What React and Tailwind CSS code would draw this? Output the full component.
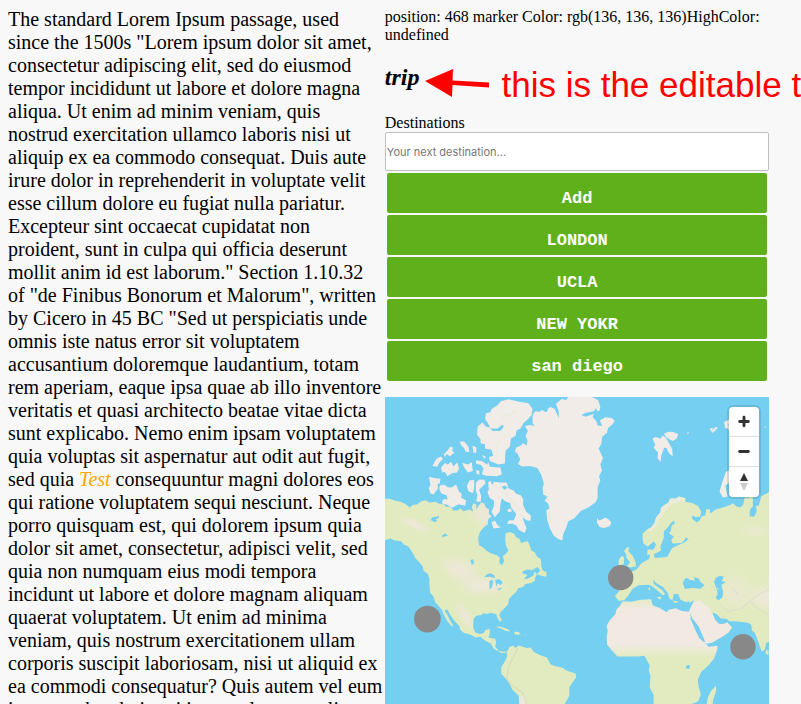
import React from "react";

const stops = ["LONDON", "UCLA", "NEW YOKR", "san diego"];

const actionClass =
  "block h-10 w-full rounded-xs bg-[#5fb01a] pt-3 text-center font-['Liberation_Mono',monospace] text-[17px] font-bold leading-7 text-white";

const tundra = "#f1ece7";
const meadow = "#e2ebbf";
const water = "#74cff1";

function WorldMap() {
  return (
    <svg
      className="block h-full w-full"
      viewBox="0 0 1152 1200"
      preserveAspectRatio="xMidYMin slice"
      role="img"
      aria-label="World map"
    >
      <defs>
        <radialGradient id="dry">
          <stop offset="0" stopColor="#efe7dc" stopOpacity="0.95" />
          <stop offset="0.5" stopColor="#efe7dc" stopOpacity="0.6" />
          <stop offset="1" stopColor="#efe7dc" stopOpacity="0" />
        </radialGradient>
        <linearGradient id="africa" x1="0" y1="0" x2="0" y2="1">
          <stop offset="0" stopColor="#e5ebc5" />
          <stop offset="0.07" stopColor="#f1e9e2" />
          <stop offset="0.31" stopColor="#f1e9e2" />
          <stop offset="0.4" stopColor={meadow} />
          <stop offset="1" stopColor={meadow} />
        </linearGradient>
        <clipPath id="americaClip">
          <path id="america" d="M0 305L14 305 30 311 47 314 60 320 74 331 84 323 96 322 108 312 121 309 133 316 151 314 160 319 178 322 182 329 197 329 204 340 219 339 225 333 235 342 252 337 265 344 260 330 265 318 273 322 274 338 281 324 289 316 297 319 302 332 311 336 310 350 319 357 309 366 307 382 295 391 284 405 279 422 282 444 292 449 305 461 318 469 335 474 344 482 342 496 350 505 357 491 353 477 361 470 370 459 362 445 360 424 362 407 375 404 388 410 393 421 402 424 408 437 426 431 432 440 438 459 449 466 455 478 467 486 468 505 472 520 484 524 483 538 470 536 455 531 449 543 449 551 435 558 421 560 413 569 399 573 392 585 379 597 371 606 369 621 358 633 344 646 343 656 350 667 345 673 337 663 333 650 316 646 307 650 295 648 288 653 273 655 265 665 264 690 270 705 284 710 296 707 301 698 315 695 313 711 310 721 330 724 333 735 330 747 340 760 353 763 365 762 360 766 349 767 338 761 325 753 318 739 297 728 286 718 272 720 255 711 237 707 226 698 222 685 208 670 196 654 186 636 178 640 187 653 194 668 204 684 201 688 188 673 177 654 170 637 161 626 150 614 145 597 135 586 133 563 133 543 128 529 116 521 113 508 103 495 91 483 85 470 76 457 69 447 56 442 48 432 27 429 17 424 0 428Z" />
        </clipPath>
        <clipPath id="asiaClip">
          <path d="M700 380L870 300 1152 270V760H1120L960 670 860 600H690Z" />
        </clipPath>
      </defs>
      <rect width="1152" height="1200" fill={water} />

      <g fill={meadow}>
        <use href="#america" />
        <g clipPath="url(#americaClip)">
          <ellipse cx="225" cy="518" rx="72" ry="43" fill="url(#dry)" transform="rotate(28 225 518)" />
          <ellipse cx="292" cy="566" rx="85" ry="35" fill="url(#dry)" />
          <ellipse cx="306" cy="345" rx="60" ry="55" fill="url(#dry)" />
          <ellipse cx="90" cy="382" rx="60" ry="18" fill="url(#dry)" transform="rotate(25 90 382)" />
          <ellipse cx="239" cy="654" rx="21" ry="53" fill="url(#dry)" transform="rotate(-30 239 654)" />
        </g>
        <path d="M364 765L373 749 385 744 390 752 401 744 424 752 437 750 444 762 463 773 485 780 496 801 508 806 531 811 545 820 571 828 573 839 560 857 552 870 552 895 538 920 520 960 490 990 470 1030 445 1080 430 1130 412 1120 414 1050 410 975 403 920 400 894 383 878 369 853 357 838 348 829 348 809 357 796 366 776Z" />
        <path d="M331 688L343 687 355 691 371 697 374 702 360 700 347 693ZM386 703L400 704 407 711 390 712ZM417 711L420 713 417 715Z" />
      </g>
      <path d="M397 752L384 781 371 807 365 842 378 862 413 886 423 920" fill="none" stroke="#d9dcba" strokeWidth="4" />
      <path d="M401 900L415 894 424 930 424 1090 413 1085Z" fill="#eee8de" />

      <g fill={water}>
        <path d="M136 369L142 360 154 359 162 354 160 363 151 366 157 370 147 376 143 371ZM171 415L181 408 188 415 179 418 173 421Z" />
        <path d="M256 488L264 486 267 499 260 503ZM297 540L306 530 316 528 329 535 328 543 316 538ZM313 551L320 547 324 551 320 571 313 576ZM330 547L343 546 353 554 346 563 337 558 333 569ZM336 574L353 571 341 579ZM410 524L425 517 441 518 457 509 465 519 455 531 448 523 444 535 427 544 416 545 427 533 415 529Z" />
      </g>

      <g fill={tundra}>
        <path d="M302 49L315 46 320 35 337 25 347 13 370 7 405 15 429 18 442 36 439 53 428 67 415 78 406 94 394 100 391 116 377 124 374 149 361 161 359 199 340 202 314 192 311 180 324 177 319 158 299 154 300 142 286 138 286 126 276 114 277 89 292 76 302 88 315 91 307 76 300 67Z" />
        <path d="M315 91L320 101 345 102 356 88 352 83 337 94 318 94Z" fill={water} />
        <path d="M224 133L237 133 250 149 253 165 242 164 236 151 228 145ZM262 145L274 151 273 167 265 167ZM187 160L195 149 204 151 201 162 208 166 194 178 185 170 180 180 176 172ZM142 207L154 185 168 178 174 185 162 198 156 209ZM168 211L180 198 188 203 198 194 205 208 216 196 222 214 216 226 201 228 187 237 179 224 171 226ZM231 197L249 202 260 195 263 222 249 226 238 213ZM273 219L283 222 282 233 274 230ZM272 190L290 192 306 203 309 194 314 209 346 211 350 232 335 237 303 236 290 231 295 214 288 204 273 200ZM290 174L302 179 298 185Z" />
        <path d="M132 239L151 243 166 245 164 258 157 262 159 273 145 292 136 289 131 273 136 264ZM164 265L178 263 188 270 199 271 213 262 221 282 230 290 228 302 243 309 240 326 221 321 201 332 186 323 170 318 174 306 188 306 184 294 169 289 163 278ZM245 267L253 250 267 248 267 274 263 288 250 282ZM272 257L282 247 298 248 301 258 291 269 282 278 288 296 287 314 273 313 277 295 272 281Z" />
        <path d="M309 256L316 251 321 263 327 254 345 256 364 256 370 273 386 281 393 290 407 294 414 307 414 324 423 344 437 355 436 371 426 370 412 361 416 373 424 394 418 407 401 398 395 386 381 379 365 381 371 370 386 369 393 351 378 331 375 318 360 312 350 303 346 318 344 342 329 360 319 344 326 328 327 311 314 303 307 285 311 277ZM366 338L378 333 379 344 369 345ZM319 376L329 370 337 383 347 391 325 394Z" />
        <path d="M350 268L359 265 368 272 357 278ZM225 255L230 280 224 287Z" fill={water} />
        <path d="M442 55L450 43 462 44 471 39 481 45 493 39 501 46 500 59 487 64 487 36 495 30 508 35 521 64 520 42 512 20 529 6 543 9 549 0H619L638 9 645 29 642 41 626 48 622 61 635 75 660 61 679 63 688 71 681 82 668 93 665 107 650 119 648 141 640 154 647 170 653 183 645 202 650 220 641 237 645 250 637 270 637 302 631 315 609 331 588 340 567 363 549 372 543 391 534 410 531 430 519 425 506 416 494 394 486 369 483 340 493 333 488 318 478 310 489 298 474 293 472 272 476 260 468 233 456 213 434 207 411 208 398 201 405 187 397 169 389 163 393 151 406 146 414 138 424 145 427 130 421 116 428 102 419 87 435 84 447 87 442 76Z" />
        <path d="M588 54L602 47 625 43 632 34 637 44 622 52 601 59ZM632 68L642 65 650 87 637 85Z" fill={water} />
        <path d="M801 124L810 120 825 124 832 115 841 121 853 143 860 155 862 178 851 169 843 153 836 152 827 177 826 194 816 183 818 167 804 151 810 144ZM835 110L847 105 861 104 878 111 874 124 862 132 850 126 844 121ZM972 95L982 91 980 100 988 91 998 90 991 99 981 108ZM903 108L910 105 908 111ZM1016 75L1035 65 1035 82 1026 82 1035 90 1030 97 1018 91ZM1137 88L1141 88 1140 94ZM635 362L640 370 647 368 660 361 670 367 678 376 673 387 656 392 643 389 635 376Z" />
        <path d="M1021 224L1035 219V252L1019 266 1026 298 1012 301 1002 283 1009 258Z" />
      </g>

      <g stroke="#e5ecd3" strokeWidth="4" fill="none" opacity="0.7">
        <path d="M393 40L377 52 355 58 346 70M347 127L336 148 334 183M190 216L208 222M145 253L147 268M184 288L211 315M340 268L375 304 405 343M407 352L421 365" />
        <path d="M479 282L489 312M489 340L494 382" />
      </g>

      <path fill={meadow} d="M772 409L783 398 798 389 807 377 812 360 824 346 827 331 840 321 849 316 854 304 871 304 881 298 900 303 900 314 922 318 938 327 947 344 944 358 930 360 922 354 919 364 934 376 942 370 948 358 959 355 962 336 973 336 974 349 990 337 1005 333 1023 327 1036 322 1042 318 1052 327 1064 331 1073 322 1077 302 1090 302 1101 287 1102 327 1093 338 1092 357 1106 359 1113 343 1111 327 1120 324 1127 339 1120 323 1127 297 1152 284V733L1142 736 1137 758 1128 762 1117 730 1107 705 1099 699 1097 682 1087 676 1070 674 1048 672 1030 672 1018 665 1010 652 1022 674 1039 690 1028 706 1003 722 980 735 965 738 952 733 940 708 928 685 918 656 911 640 925 610 918 609 902 615 885 607 878 590 865 590 861 608 852 605 847 587 833 570 812 557 803 547 805 560 832 580 839 590 832 594 822 585 802 568 791 562 777 563 759 564 741 575 729 594 717 608 701 611 689 597 705 576 701 566 699 548 722 541 736 525 754 516 768 498 791 485 793 474 786 459 805 457 812 442 805 433 787 448 774 439 771 422Z" />
      <g fill={water}>
        <path d="M858 376L865 370 868 378 858 386 856 401 850 408 865 418 857 429 862 439 888 437 906 420 904 431 890 439 872 446 859 454 845 479 808 482 805 471 827 460 825 447 830 435 835 421 835 403 847 390ZM898 421L910 426 899 432Z" />
        <path d="M892 558L896 547 902 541 913 547 928 550 925 540 938 543 946 555 957 563 945 574 922 572 898 575ZM986 554L991 542 1002 536 1014 538 1008 552 1020 554 1007 562 1012 584 1010 600 999 609 991 601 997 590 992 570ZM981 646L993 651 1006 664 1022 665 1031 672 1015 678 1001 679 989 668Z" />
      </g>
      <ellipse cx="1051" cy="585" rx="58" ry="65" fill="url(#dry)" opacity="0.7" />
      <g clipPath="url(#asiaClip)">
        <ellipse cx="1140" cy="600" rx="66" ry="45" fill="url(#dry)" />
        <ellipse cx="1105" cy="402" rx="50" ry="22" fill="url(#dry)" opacity="0.6" />
      </g>
      <path fill={tundra} opacity="0.6" d="M783 398L798 389 807 377 812 360 824 346 827 331 840 321 849 316 854 304 871 304 881 298 900 303 892 312 865 318 846 332 836 350 822 368 813 388 796 402Z" />
      <path fill="#f1e9e2" d="M926 613L944 608 956 622 970 629 980 650 998 678 1016 682 1024 673 1039 690 1028 706 1003 722 980 735 965 738 952 733 940 708 928 685 918 656 911 640Z" />
      <path d="M986 554L991 542 1002 536 1014 538 1008 552 1020 554 1007 562 1012 584 1010 600 999 609 991 601 997 590 992 570ZM981 646L993 651 1006 664 1022 665 1031 672 1015 678 1001 679 989 668Z" fill={water} />
      <path fill="none" stroke="#dddec9" strokeWidth="3" d="M1001 620L1027 642 1068 634 1093 611 1114 594 1152 575M1092 613L1111 630 1152 653M977 567L1001 576M1038 570L1058 591" />

      <path fill={meadow} d="M716 462L722 452 732 449 729 462 741 475 750 492 752 507 735 511 725 507 734 495 724 483 722 470ZM700 488L708 476 716 479 715 501 700 504ZM787 457L797 457 795 469 785 475ZM788 575L793 568 794 580ZM814 599L828 598 824 607ZM860 609L880 613 869 617ZM907 610L925 606 915 616ZM1141 756L1149 761 1148 772 1140 770Z" />
      <path fill="url(#africa)" d="M703 626L712 612 736 613 767 607 797 606 802 624 824 633 844 645 850 637 871 633 888 641 913 643 917 663 926 683 936 702 942 718 958 735 969 748 996 745 995 757 984 786 968 804 947 824 937 845 939 866 946 890 938 911 918 920 914 960 895 1000 870 1040 835 1040 824 990 815 945 804 916 805 893 793 870 795 834 790 819 793 804 777 775 758 777 724 777 696 777 677 756 665 741 664 721 667 701 664 685 673 669 690 651 693 637Z" />
      <path fill={water} d="M902 805L913 802 912 814 900 813ZM913 660L925 668 940 689 949 709 959 733 953 733 940 720 929 696Z" />
      <path fill={meadow} d="M991 865L992 880 983 906 978 940 965 947 963 925 967 900 976 881Z" />

      <g fill="#888888">
        <circle cx="127" cy="665" r="40" />
        <circle cx="706" cy="541" r="38" />
        <circle cx="1072" cy="748" r="38" />
      </g>
    </svg>
  );
}

function MapControls() {
  return (
    <div className="absolute top-[10px] right-[10px] w-[30px] divide-y divide-[#dddddd] overflow-hidden rounded bg-white shadow-[0_0_0_2px_rgba(0,0,0,0.1)]">
      <button type="button" aria-label="Zoom in" className="block h-[30px] w-full">
        <svg viewBox="0 0 30 30" className="block h-full w-full">
          <path d="M15 10.5V19.5M10.5 15H19.5" stroke="#333" strokeWidth="3" strokeLinecap="round" />
        </svg>
      </button>
      <button type="button" aria-label="Zoom out" className="block h-[30px] w-full">
        <svg viewBox="0 0 30 30" className="block h-full w-full">
          <path d="M10.5 15H19.5" stroke="#333" strokeWidth="3" strokeLinecap="round" />
        </svg>
      </button>
      <button type="button" aria-label="Reset bearing to north" className="block h-[30px] w-full">
        <svg viewBox="0 0 30 30" className="block h-full w-full">
          <path d="M15 6L19 14H11Z" fill="#333" />
          <path d="M11 16H19L15 24Z" fill="#ccc" />
        </svg>
      </button>
    </div>
  );
}

export default function App() {
  return (
    <main className="flex h-screen overflow-hidden bg-[#f8f8f8] p-2 font-['Liberation_Serif',serif] text-black">
      <article className="w-[48%] shrink-0 text-[20px] leading-[23px]">
        The standard Lorem Ipsum passage, used since the 1500s "Lorem ipsum dolor sit amet,
        consectetur adipiscing elit, sed do eiusmod tempor incididunt ut labore et dolore magna
        aliqua. Ut enim ad minim veniam, quis nostrud exercitation ullamco laboris nisi ut aliquip
        ex ea commodo consequat. Duis aute irure dolor in reprehenderit in voluptate velit esse
        cillum dolore eu fugiat nulla pariatur. Excepteur sint occaecat cupidatat non proident,
        sunt in culpa qui officia deserunt mollit anim id est laborum." Section 1.10.32 of "de
        Finibus Bonorum et Malorum", written by Cicero in 45 BC "Sed ut perspiciatis unde omnis
        iste natus error sit voluptatem accusantium doloremque laudantium, totam rem aperiam,
        eaque ipsa quae ab illo inventore veritatis et quasi architecto beatae vitae dicta sunt
        explicabo. Nemo enim ipsam voluptatem quia voluptas sit aspernatur aut odit aut fugit, sed
        quia <em className="text-[#ffa500]">Test</em> consequuntur magni dolores eos qui ratione
        voluptatem sequi nesciunt. Neque porro quisquam est, qui dolorem ipsum quia dolor sit
        amet, consectetur, adipisci velit, sed quia non numquam eius modi tempora incidunt ut
        labore et dolore magnam aliquam quaerat voluptatem. Ut enim ad minima veniam, quis nostrum
        exercitationem ullam corporis suscipit laboriosam, nisi ut aliquid ex ea commodi
        consequatur? Quis autem vel eum iure reprehenderit qui in ea voluptate velit
      </article>

      <section className="w-[49%] shrink-0">
        <p className="text-base leading-[18px]">
          position: 468 marker Color: rgb(136, 136, 136)HighColor: undefined
        </p>

        <div className="mt-5 flex items-start whitespace-nowrap">
          <h2 className="text-2xl leading-[27px] font-bold italic">trip</h2>
          <svg className="ml-1.5 h-[42px] w-16 shrink-0" viewBox="0 0 64 42" aria-hidden="true">
            <path d="M0 17L28 5 27.5 16.5 64 18.5V23.5L27.5 21 27 33Z" fill="#f00" />
          </svg>
          <span className="ml-3 font-['Liberation_Sans',sans-serif] text-[35px] leading-[42px] text-[#ff0000]">
            this is the editable title
          </span>
        </div>

        <label htmlFor="destination" className="mt-2 block text-base leading-[18px]">
          Destinations
        </label>
        <input
          id="destination"
          type="text"
          placeholder="Your next destination..."
          className="block h-[39px] w-full rounded-xs border border-[#c0c0c0] bg-white px-px font-['Inter',sans-serif] text-[11px] placeholder:text-[#777777]"
        />

        <div className="flex flex-col gap-0.5 p-0.5">
          <button type="button" className={actionClass}>Add</button>
          {stops.map((stop) => (
            <button key={stop} type="button" className={actionClass}>{stop}</button>
          ))}
        </div>

        <div className="relative mt-3.5 h-[400px] overflow-hidden">
          <WorldMap />
          <MapControls />
        </div>
      </section>
    </main>
  );
}
